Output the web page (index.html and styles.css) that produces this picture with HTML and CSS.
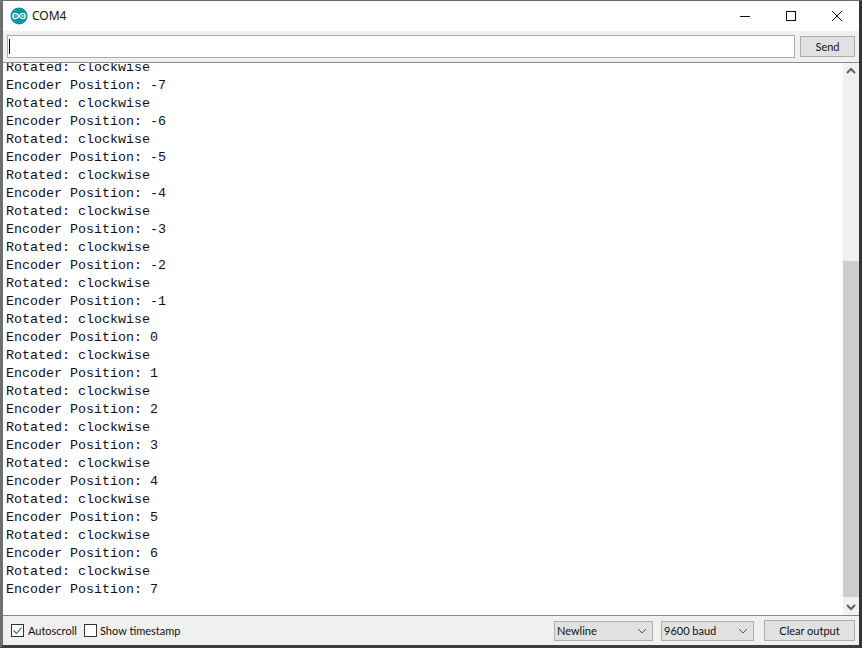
FILE: index.html
```html
<!DOCTYPE html>
<html lang="en">
<head>
<meta charset="utf-8">
<title>COM4</title>
<link rel="stylesheet" href="styles.css">
</head>
<body>
<div class="window">
  <header class="titlebar">
    <svg class="logo" width="18" height="18" viewBox="0 0 18 18"><circle cx="9" cy="9" r="8.5" fill="#00979d"/><path d="M5.500 6.300a2.700 2.700 0 1 0 0 5.400c1.600 0 2.500-1.500 3.500-2.700-1-1.200-1.900-2.700-3.500-2.700zM12.500 6.300a2.700 2.700 0 1 1 0 5.400c-1.600 0-2.500-1.500-3.500-2.700 1-1.200 1.900-2.700 3.500-2.700z" fill="none" stroke="#fff" stroke-width="1.300"/><path d="M4.500 9h2M11.500 9h2M12.500 8v2" stroke="#fff" stroke-width=".9"/></svg>
    <span class="title">COM4</span>
    <div class="controls">
      <svg class="ctl" width="46" height="30" viewBox="0 0 46 30"><path d="M18 15.500h10" stroke="#111" stroke-width="1"/></svg>
      <svg class="ctl" width="46" height="30" viewBox="0 0 46 30"><rect x="18.500" y="10.500" width="9" height="9" fill="none" stroke="#111"/></svg>
      <svg class="ctl" width="46" height="30" viewBox="0 0 46 30"><path d="M18 10l10 10M28 10l-10 10" stroke="#111" stroke-width="1"/></svg>
    </div>
  </header>
  <div class="sendrow">
    <div class="input"><span class="caret"></span></div>
    <div class="btn send">Send</div>
  </div>
  <div class="main">
    <div class="output">
      <div>Rotated: clockwise</div>
      <div>Encoder Position: -7</div>
      <div>Rotated: clockwise</div>
      <div>Encoder Position: -6</div>
      <div>Rotated: clockwise</div>
      <div>Encoder Position: -5</div>
      <div>Rotated: clockwise</div>
      <div>Encoder Position: -4</div>
      <div>Rotated: clockwise</div>
      <div>Encoder Position: -3</div>
      <div>Rotated: clockwise</div>
      <div>Encoder Position: -2</div>
      <div>Rotated: clockwise</div>
      <div>Encoder Position: -1</div>
      <div>Rotated: clockwise</div>
      <div>Encoder Position: 0</div>
      <div>Rotated: clockwise</div>
      <div>Encoder Position: 1</div>
      <div>Rotated: clockwise</div>
      <div>Encoder Position: 2</div>
      <div>Rotated: clockwise</div>
      <div>Encoder Position: 3</div>
      <div>Rotated: clockwise</div>
      <div>Encoder Position: 4</div>
      <div>Rotated: clockwise</div>
      <div>Encoder Position: 5</div>
      <div>Rotated: clockwise</div>
      <div>Encoder Position: 6</div>
      <div>Rotated: clockwise</div>
      <div>Encoder Position: 7</div>
    </div>
    <div class="scrollbar">
      <svg class="arrow" width="16" height="16" viewBox="0 0 16 16"><path d="M4 10l4-4 4 4" fill="none" stroke="#606060" stroke-width="2"/></svg>
      <div class="track"><div class="thumb"></div></div>
      <svg class="arrow" width="16" height="16" viewBox="0 0 16 16"><path d="M4 6l4 4 4-4" fill="none" stroke="#606060" stroke-width="2"/></svg>
    </div>
  </div>
  <footer class="footer">
    <label class="check auto">
      <svg width="13" height="13" viewBox="0 0 13 13"><rect x=".5" y=".5" width="12" height="12" fill="#fff" stroke="#333"/><path d="M2.500 6.500l3 3 5-6" fill="none" stroke="#555" stroke-width="1.100"/></svg>
      Autoscroll
    </label>
    <label class="check">
      <svg width="13" height="13" viewBox="0 0 13 13"><rect x=".5" y=".5" width="12" height="12" fill="#fff" stroke="#333"/></svg>
      Show timestamp
    </label>
    <div class="select newline">Newline<svg width="10" height="6" viewBox="0 0 10 6"><path d="M1 1l4 4 4-4" fill="none" stroke="#555"/></svg></div>
    <div class="select baud">9600 baud<svg width="10" height="6" viewBox="0 0 10 6"><path d="M1 1l4 4 4-4" fill="none" stroke="#555"/></svg></div>
    <div class="btn clear">Clear output</div>
  </footer>
</div>
</body>
</html>
```
FILE: styles.css
```css
* { box-sizing: border-box; }
html, body { margin: 0; padding: 0; height: 100%; overflow: hidden; }
body { background: #fff; }
.window {
  width: 862px; height: 648px;
  display: flex; flex-direction: column;
  font-family: Lato, "Noto Sans", Arial, sans-serif;
  font-size: 11px; color: #111;
  border-top: 1px solid #6d6d6d;
  border-left: 3px solid #6f6f6f;
  border-right: 3px solid #30343a;
  border-bottom: 3px solid #3a3d42;
  background: #f0f0f0;
}
.titlebar { height: 30px; background: #fff; display: flex; align-items: center; padding-left: 7px; flex: none; }
.logo { margin-top: -1px; }
.title { margin-left: 4px; font-family: "Noto Sans", sans-serif; font-size: 12px; margin-top: -1px; }
.controls { margin-left: auto; display: flex; margin-right: -1px; }
.ctl { display: block; }
.sendrow { height: 32px; flex: none; display: flex; align-items: flex-start; padding: 4px 4px 0 4px; border-bottom: 1px solid #8a8a8a; }
.input { width: 788px; height: 23px; border: 1px solid #adadad; background: #fff; display: flex; align-items: center; padding-left: 1px; }
.caret { width: 1px; height: 15px; background: #000; }
.btn { display: flex; align-items: center; justify-content: center; background: #e1e1e1; border: 1px solid #adadad; }
.send { width: 55px; height: 21px; margin-left: 5px; margin-top: 1px; }
.main { flex: 1; min-height: 0; display: flex; background: #fff; }
.output {
  flex: 1; min-width: 0; overflow: hidden;
  display: flex; flex-direction: column; justify-content: flex-end;
  padding: 0 0 16px 3px;
  font-family: "Liberation Mono", "Courier New", monospace;
  font-size: 13.33px; line-height: 18px; color: #111;
  white-space: pre;
}
.output div { flex: none; }
.scrollbar { width: 16px; background: #f0f0f0; display: flex; flex-direction: column; flex: none; }
.arrow { display: block; flex: none; }
.track { flex: 1; display: flex; flex-direction: column; justify-content: flex-end; padding-bottom: 2px; }
.thumb { height: 336px; background: #cdcdcd; }
.footer { height: 30px; flex: none; display: flex; align-items: center; border-top: 1px solid #8a8a8a; padding: 0 4px 0 8px; }
.check { display: flex; align-items: center; gap: 3px; }
.auto { width: 73px; gap: 4px; }
.select { height: 20px; background: #e1e1e1; border: 1px solid #adadad; display: flex; align-items: center; justify-content: space-between; padding: 0 5px 0 2px; }
.newline { width: 99px; margin-left: auto; margin-right: 1px; }
.baud { width: 93px; margin-left: 7px; }
.clear { width: 91px; height: 21px; margin-left: 10px; }
```
